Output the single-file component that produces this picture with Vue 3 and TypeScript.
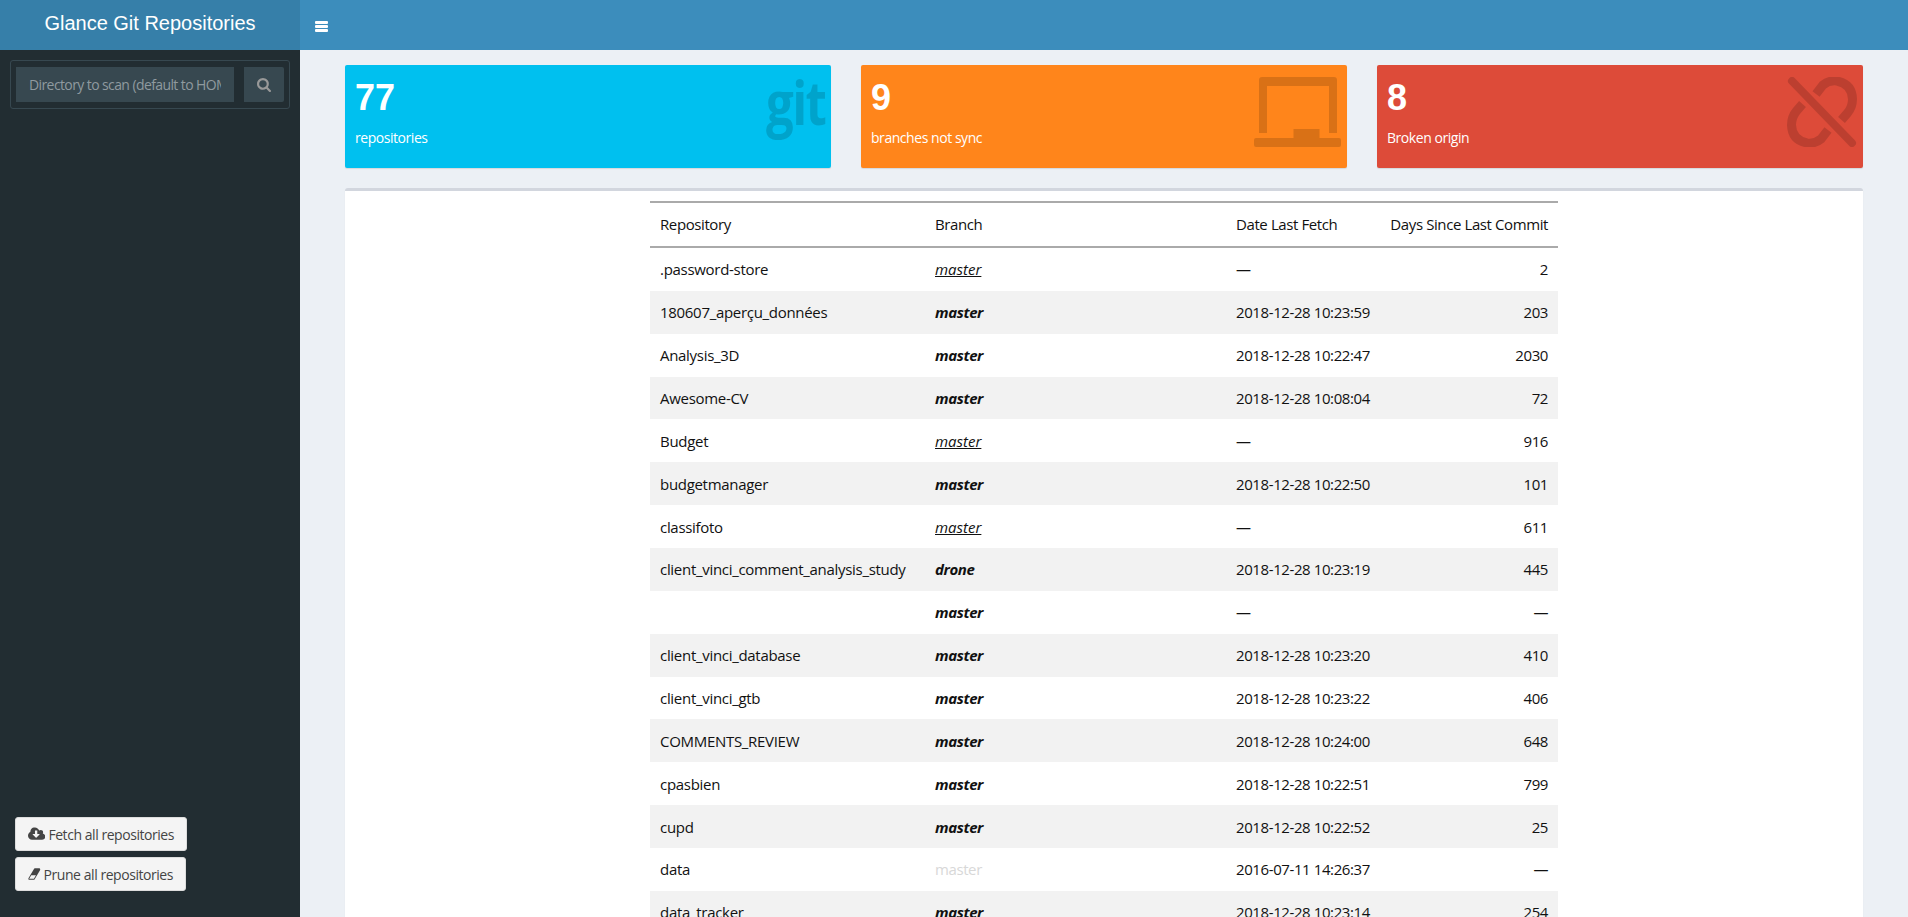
<template>
  <div class="app">
    <aside class="sidebar">
      <div class="logo">Glance Git Repositories</div>
      <form class="search" @submit.prevent>
        <input class="search-input" type="text" placeholder="Directory to scan (default to HOME)" />
        <button class="search-btn" type="button" aria-label="Search">
          <svg viewBox="0 0 1664 1664" width="14" height="14" fill="currentColor"><path d="M1152 704q0-185-131.500-316.500T704 256 387.500 387.500 256 704t131.500 316.500T704 1152t316.500-131.500T1152 704zm512 832q0 52-38 90t-90 38q-54 0-90-38l-343-342q-179 124-399 124-143 0-273.500-55.500t-225-150-150-225T0 704t55.500-273.500 150-225 225-150T704 0t273.500 55.500 225 150 150 225T1408 704q0 220-124 399l343 343q37 37 37 90z"/></svg>
        </button>
      </form>
      <div class="actions">
        <button class="action-btn fetch" type="button">
          <svg viewBox="0 0 1920 1408" width="18" height="14" fill="currentColor"><path d="M1280 736q0-14-9-23t-23-9h-224V352q0-13-9.500-22.500T992 320H800q-13 0-22.500 9.500T768 352v352H544q-14 0-23 9t-9 23q0 14 9 23l352 352q9 9 23 9t23-9l351-351q10-12 10-24zm640 224q0 159-112.500 271.500T1536 1344H448q-185 0-316.500-131.500T0 896q0-130 70-240t188-165q-2-30-2-43 0-212 150-362T768 0q156 0 285.500 87T1242 318q71-62 166-62 106 0 181 75t75 181q0 76-41 138 130 31 213.500 135.500T1920 960z"/></svg>
          Fetch all repositories
        </button>
        <button class="action-btn" type="button">
          <svg viewBox="0 230 2048 1320" width="15" height="12" preserveAspectRatio="none" fill="currentColor"><path d="M960 1408l336-384H528l-336 384h768zm1013-1077q15 34 9.500 71.500T1952 465L1056 1489q-38 44-96 44H192q-38 0-69.500-20.500T75 1458q-15-34-9.500-71.500T96 1324L992 300q38-44 96-44h768q38 0 69.500 20.500T1973 331z"/></svg>
          Prune all repositories
        </button>
      </div>
    </aside>

    <div class="main">
      <header class="topbar">
        <span class="toggle" aria-label="Toggle navigation"><i></i><i></i><i></i></span>
      </header>
      <div class="content">
        <div class="stats">
          <div class="stat blue">
            <div class="stat-value">77</div>
            <p>repositories</p>
            <span class="stat-git">git</span>
          </div>
          <div class="stat orange">
            <div class="stat-value">9</div>
            <p>branches not sync</p>
            <svg class="stat-icon" viewBox="0 0 87 70" width="87" height="70" fill="rgba(0,0,0,0.15)">
              <path d="M5 3q0-3 3-3h72q3 0 3 3v53h-8V9H13v47H5z" />
              <path d="M0 63q0-2 2-2h37.500v-9h26v9H85q2 0 2 2v5q0 2-2 2H2q-2 0-2-2z" />
            </svg>
          </div>
          <div class="stat red">
            <div class="stat-value">8</div>
            <p>Broken origin</p>
            <svg class="stat-icon" viewBox="0 0 70 70" width="70" height="70" fill="none" stroke="rgba(0,0,0,0.15)" stroke-width="9">
              <path d="M5 4l60 62" stroke-width="8" stroke-linecap="round" />
              <path d="M29 17l7-9q6-5 14-4 15 3 15.500 18 0 8-5 14l-6 7" />
              <path d="M41 53l-7 9q-6 5-14 4Q5 63 4.500 48q0-8 5-14l6-7" />
            </svg>
          </div>
        </div>

        <section class="box">
          <table class="repos">
            <thead>
              <tr>
                <th class="col-repo">Repository</th>
                <th class="col-branch">Branch</th>
                <th class="col-date">Date Last Fetch</th>
                <th class="col-days">Days Since Last Commit</th>
              </tr>
            </thead>
            <tbody>
              <tr v-for="(row, index) in rows" :key="index">
                <td class="repo-name">{{ row.repo }}</td>
                <td :class="`branch-${row.kind}`">{{ row.branch }}</td>
                <td>{{ row.date }}</td>
                <td class="num">{{ row.days }}</td>
              </tr>
            </tbody>
          </table>
        </section>
      </div>
    </div>
  </div>
</template>

<script setup lang="ts">
type Row = {
  repo: string;
  branch: string;
  kind: 'local' | 'synced' | 'stale';
  date: string;
  days: string;
};

const row = (repo: string, days: string, time = '', kind: Row['kind'] = 'synced', branch = 'master'): Row => ({
  repo,
  branch,
  kind,
  date: time ? `2018-12-28 ${time}` : '—',
  days,
});

const rows: Row[] = [
  row('.password-store', '2', '', 'local'),
  row('180607_aperçu_données', '203', '10:23:59'),
  row('Analysis_3D', '2030', '10:22:47'),
  row('Awesome-CV', '72', '10:08:04'),
  row('Budget', '916', '', 'local'),
  row('budgetmanager', '101', '10:22:50'),
  row('classifoto', '611', '', 'local'),
  row('client_vinci_comment_analysis_study', '445', '10:23:19', 'synced', 'drone'),
  row('', '—'),
  row('client_vinci_database', '410', '10:23:20'),
  row('client_vinci_gtb', '406', '10:23:22'),
  row('COMMENTS_REVIEW', '648', '10:24:00'),
  row('cpasbien', '799', '10:22:51'),
  row('cupd', '25', '10:22:52'),
  { repo: 'data', branch: 'master', kind: 'stale', date: '2016-07-11 14:26:37', days: '—' },
  row('data_tracker', '254', '10:23:14'),
];
</script>

<style>
html,
body {
  height: 100%;
  overflow: hidden;
}
</style>

<style scoped>
.app {
  display: flex;
  height: 100vh;
  overflow: hidden;
  background: #ecf0f5;
  color: #111;
  font-family: "Open Sans", "Noto Sans", sans-serif;
  font-size: 14px;
  letter-spacing: -0.45px;
}

.sidebar {
  flex: 0 0 300px;
  display: flex;
  flex-direction: column;
  background: #222d32;
}

.logo {
  height: 50px;
  line-height: 47px;
  background: #367fa9;
  color: #fff;
  font-family: "Liberation Sans", Arial, sans-serif;
  font-size: 20px;
  letter-spacing: 0;
  text-align: center;
}

.search {
  display: flex;
  gap: 10px;
  align-items: center;
  margin: 10px 10px 0;
  padding: 5px;
  height: 49px;
  box-sizing: border-box;
  border: 1px solid #374850;
  border-radius: 3px;
}

.search-input {
  width: 218px;
  height: 35px;
  box-sizing: border-box;
  padding: 6px 13px;
  border: 0;
  background: #374850;
  color: #fff;
  font: inherit;
  letter-spacing: -0.6px;
}

.search-input::placeholder {
  color: #8f9a9f;
}

.search-btn {
  display: flex;
  align-items: center;
  justify-content: center;
  width: 40px;
  height: 35px;
  padding: 0;
  border: 0;
  border-radius: 0 2px 2px 0;
  background: #374850;
  color: #999;
}

.actions {
  display: flex;
  flex-direction: column;
  align-items: flex-start;
  gap: 6px;
  margin-top: auto;
  padding: 0 0 26px 15px;
}

.action-btn {
  display: flex;
  align-items: center;
  gap: 3px;
  height: 34px;
  width: 171px;
  box-sizing: border-box;
  padding: 0 12px;
  border: 1px solid #ddd;
  border-radius: 3px;
  background: #f4f4f4;
  color: #444;
  font: inherit;
  letter-spacing: inherit;
  white-space: nowrap;
}

.action-btn.fetch {
  width: 172px;
}

.main {
  flex: 1;
  min-width: 0;
  display: flex;
  flex-direction: column;
}

.topbar {
  flex: 0 0 50px;
  background: #3c8dbc;
}

.toggle {
  display: inline-flex;
  flex-direction: column;
  gap: 1px;
  margin: 21px 0 0 15px;
  width: 13px;
}

.toggle i {
  display: block;
  height: 3px;
  background: #fff;
  border-radius: 1px;
}

.content {
  padding: 15px 45px 0;
}

.stats {
  display: grid;
  grid-template-columns: repeat(3, 486px);
  gap: 30px;
}

.stat {
  position: relative;
  height: 103px;
  box-sizing: border-box;
  padding: 10px;
  border-radius: 2px;
  box-shadow: 0 1px 1px rgba(0, 0, 0, 0.1);
  color: #fff;
}

.stat p {
  margin: 0;
  padding-top: 7px;
  line-height: 20px;
}

.stat-value {
  font-family: "Liberation Sans", Arial, sans-serif;
  font-size: 36px;
  font-weight: 700;
  letter-spacing: 0;
  line-height: 46px;
}

.blue {
  background: #00c0ef;
}

.orange {
  background: #ff851b;
}

.red {
  background: #dd4b39;
}

.stat-icon {
  position: absolute;
  top: 12px;
  right: 6px;
}

.stat-git {
  position: absolute;
  top: -3px;
  right: 6px;
  color: rgba(0, 0, 0, 0.15);
  font-family: "Open Sans", sans-serif;
  font-size: 60px;
  font-weight: 700;
  letter-spacing: -2px;
  line-height: 80px;
  transform: scaleX(0.82);
  transform-origin: right center;
}

.box {
  margin-top: 20px;
  height: 800px;
  border-top: 3px solid #d2d6de;
  border-radius: 3px;
  background: #fff;
  box-shadow: 0 1px 1px rgba(0, 0, 0, 0.1);
}

.repos {
  width: 908px;
  margin: 10px auto 0;
  table-layout: fixed;
  border-collapse: separate;
  border-spacing: 0;
  font-size: 15px;
  letter-spacing: -0.4px;
}

.repos th,
.repos td {
  box-sizing: border-box;
  height: 42.86px;
  padding: 0 10px;
  font-weight: 400;
  text-align: left;
  white-space: nowrap;
}

.repos thead th {
  height: 47px;
  padding-bottom: 2px;
  border-top: 2px solid #aaa;
  border-bottom: 2px solid #aaa;
}

.col-repo {
  width: 275px;
}

.col-branch {
  width: 301px;
}

.col-date {
  width: 150px;
}

.repos .repo-name {
  letter-spacing: -0.3px;
}

.repos .col-days,
.repos .num {
  text-align: right;
}

.repos tbody tr:nth-child(even) {
  background: #f2f2f2;
}

.repos td.branch-synced {
  font-style: italic;
  font-weight: 700;
}

.repos td.branch-local {
  font-style: italic;
  letter-spacing: 0;
  text-decoration: underline;
}

.repos td.branch-stale {
  color: #d8d8d8;
}
</style>
